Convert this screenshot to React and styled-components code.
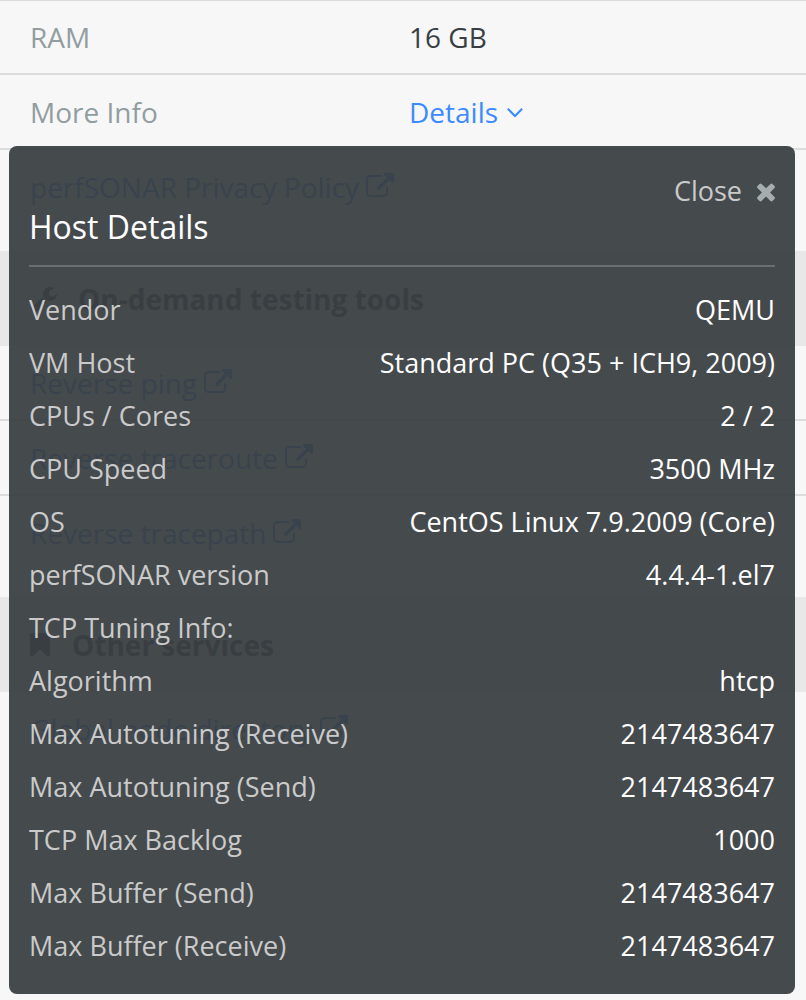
import { useState } from 'react';
import styled, { createGlobalStyle } from 'styled-components';

const GlobalStyle = createGlobalStyle`
  * {
    box-sizing: border-box;
  }

  body {
    margin: 0;
    background: #f7f7f7;
    color: #383f44;
    font-family: 'Open Sans', 'Noto Sans', sans-serif;
    font-size: 28px;
    line-height: 36px;
  }
`;

const Page = styled.main`
  min-height: 100vh;
  overflow: hidden;
`;

const Section = styled.section`
  padding-bottom: 28px;
  box-shadow: inset 0 1px 0 #dcdcdc;
`;

const List = styled.ul`
  list-style: none;
  margin: 0;
  padding: 0;
`;

const Row = styled.li`
  position: relative;
  display: grid;
  grid-template-columns: ${({ $split }) => ($split ? '1fr 1fr' : '1fr')};
  column-gap: 2px;
  align-items: center;
  min-height: 73px;
  padding: 0 20px 0 30px;

  &:not(:last-child) {
    border-bottom: 2px solid #dcdcdc;
    min-height: 75px;
  }
`;

const Label = styled.span`
  color: #929da1;
`;

const Heading = styled.h2`
  display: flex;
  align-items: center;
  gap: 20px;
  min-height: 95px;
  margin: 0;
  padding: 0 30px;
  background: #e8e8e8;
  font-size: 28px;
  font-weight: 700;
`;

const Icon = styled.svg`
  display: block;
  flex: none;
  fill: currentColor;
`;

const ServiceLink = styled.a`
  display: flex;
  align-items: center;
  gap: 7px;
  color: #3b8bff;
  text-decoration: none;
`;

const TextButton = styled.button`
  display: flex;
  align-items: center;
  padding: 0;
  border: 0;
  background: none;
  font: inherit;
  cursor: pointer;
`;

const DetailsButton = styled(TextButton)`
  gap: 9px;
  color: #3b8bff;
`;

const CloseButton = styled(TextButton)`
  gap: 15px;
  margin-left: auto;
  color: #cacaca;

  svg {
    color: #a6adb1;
  }
`;

const Popover = styled.div`
  position: absolute;
  z-index: 1;
  top: 71px;
  left: 9px;
  right: 11px;
  padding: 27px 20px 22px;
  border-radius: 8px;
  background: rgba(57, 63, 66, 0.94);
  color: #fff;
  font-size: 27px;
`;

const Title = styled.h3`
  margin: 0 0 16px;
  padding-bottom: 20px;
  border-bottom: 2px solid #696e71;
  font-size: 32px;
  font-weight: 400;
`;

const DetailsTable = styled.table`
  width: 100%;
  border-collapse: collapse;

  tr {
    height: 53px;
  }

  th,
  td {
    padding: 0;
    font-weight: 400;
  }

  th {
    color: #cacaca;
    text-align: left;
  }

  td {
    text-align: right;
  }
`;

const details = [
  ['Vendor', 'QEMU'],
  ['VM Host', 'Standard PC (Q35 + ICH9, 2009)'],
  ['CPUs / Cores', '2 / 2'],
  ['CPU Speed', '3500 MHz'],
  ['OS', 'CentOS Linux 7.9.2009 (Core)'],
  ['perfSONAR version', '4.4.4-1.el7'],
  ['TCP Tuning Info:', ''],
  ['Algorithm', 'htcp'],
  ['Max Autotuning (Receive)', '2147483647'],
  ['Max Autotuning (Send)', '2147483647'],
  ['TCP Max Backlog', '1000'],
  ['Max Buffer (Send)', '2147483647'],
  ['Max Buffer (Receive)', '2147483647'],
];

const tools = ['Reverse ping', 'Reverse traceroute', 'Reverse tracepath'];

const ExternalIcon = () => (
  <Icon width="28" height="28" viewBox="0 0 1792 1792" aria-hidden="true">
    <path d="M1408 928v320q0 119-84.5 203.5t-203.5 84.5h-832q-119 0-203.5-84.5t-84.5-203.5v-832q0-119 84.5-203.5t203.5-84.5h704q14 0 23 9t9 23v64q0 14-9 23t-23 9h-704q-66 0-113 47t-47 113v832q0 66 47 113t113 47h832q66 0 113-47t47-113v-320q0-14 9-23t23-9h64q14 0 23 9t9 23zm384-864v512q0 26-19 45t-45 19-45-19l-176-176-652 652q-10 10-23 10t-23-10l-114-114q-10-10-10-23t10-23l652-652-176-176q-19-19-19-45t19-45 45-19h512q26 0 45 19t19 45z" />
  </Icon>
);

const AngleDownIcon = () => (
  <Icon width="16" height="28" viewBox="384 0 1024 1792" aria-hidden="true">
    <path d="M1395 736q0 13-10 23l-466 466q-10 10-23 10t-23-10l-466-466q-10-10-10-23t10-23l50-50q10-10 23-10t23 10l393 393 393-393q10-10 23-10t23 10l50 50q10 10 10 23z" />
  </Icon>
);

const TimesIcon = () => (
  <Icon width="18" height="27" viewBox="302 0 1188 1792" aria-hidden="true">
    <path d="M1490 1322q0 40-28 68l-136 136q-28 28-68 28t-68-28l-294-294-294 294q-28 28-68 28t-68-28l-136-136q-28-28-28-68t28-68l294-294-294-294q-28-28-28-68t28-68l136-136q28-28 68-28t68 28l294 294 294-294q28-28 68-28t68 28l136 136q28 28 28 68t-28 68l-294 294 294 294q28 28 28 68z" />
  </Icon>
);

const WrenchIcon = () => (
  <Icon width="28" height="28" viewBox="0 0 1792 1792" aria-hidden="true">
    <path d="M448 1472q0-26-19-45t-45-19-45 19-19 45 19 45 45 19 45-19 19-45zm644-420l-682 682q-37 37-90 37-52 0-91-37l-106-108q-38-36-38-90 0-53 38-91l681-681q39 98 114.5 173.5t173.5 114.5zm634-435q0 39-23 106-47 134-164.5 217.5t-258.5 83.5q-185 0-316.5-131.5t-131.5-316.5 131.5-316.5 316.5-131.5q58 0 121.5 16.5t107.5 46.5q16 11 16 28t-16 28l-293 169v224l193 107q5-3 79-48.5t135.5-81 70.5-35.5q15 0 23.5 10t8.5 25z" />
  </Icon>
);

const BookmarkIcon = () => (
  <Icon width="22" height="28" viewBox="256 0 1408 1792" aria-hidden="true">
    <path d="M1420 128q23 0 44 9 33 13 52.5 41t19.5 62v1289q0 34-19.5 62t-52.5 41q-19 8-44 8-48 0-83-32l-441-424-441 424q-36 33-83 33-23 0-44-9-33-13-52.5-41t-19.5-62v-1289q0-34 19.5-62t52.5-41q21-9 44-9h1048z" />
  </Icon>
);

const ExternalLink = ({ children }) => (
  <ServiceLink href="#">
    {children}
    <ExternalIcon />
  </ServiceLink>
);

const HostDetails = ({ onClose }) => (
  <Popover role="dialog" aria-labelledby="host-details-title">
    <CloseButton type="button" onClick={onClose}>
      Close
      <TimesIcon />
    </CloseButton>
    <Title id="host-details-title">Host Details</Title>
    <DetailsTable>
      <tbody>
        {details.map(([name, value]) => (
          <tr key={name}>
            <th scope="row">{name}</th>
            <td>{value}</td>
          </tr>
        ))}
      </tbody>
    </DetailsTable>
  </Popover>
);

const App = () => {
  const [open, setOpen] = useState(true);

  return (
    <Page>
      <GlobalStyle />
      <Section>
        <List>
          <Row $split>
            <Label>RAM</Label>
            <span>16 GB</span>
          </Row>
          <Row $split>
            <Label>More Info</Label>
            <DetailsButton type="button" aria-expanded={open} onClick={() => setOpen(!open)}>
              Details
              <AngleDownIcon />
            </DetailsButton>
            {open && <HostDetails onClose={() => setOpen(false)} />}
          </Row>
          <Row>
            <ExternalLink>perfSONAR Privacy Policy</ExternalLink>
          </Row>
        </List>
      </Section>
      <Section>
        <Heading>
          <WrenchIcon />
          On-demand testing tools
        </Heading>
        <List>
          {tools.map((tool) => (
            <Row key={tool}>
              <ExternalLink>{tool}</ExternalLink>
            </Row>
          ))}
        </List>
      </Section>
      <Section>
        <Heading>
          <BookmarkIcon />
          Other services
        </Heading>
        <List>
          <Row>
            <ExternalLink>Global node directory</ExternalLink>
          </Row>
        </List>
      </Section>
    </Page>
  );
};

export default App;
